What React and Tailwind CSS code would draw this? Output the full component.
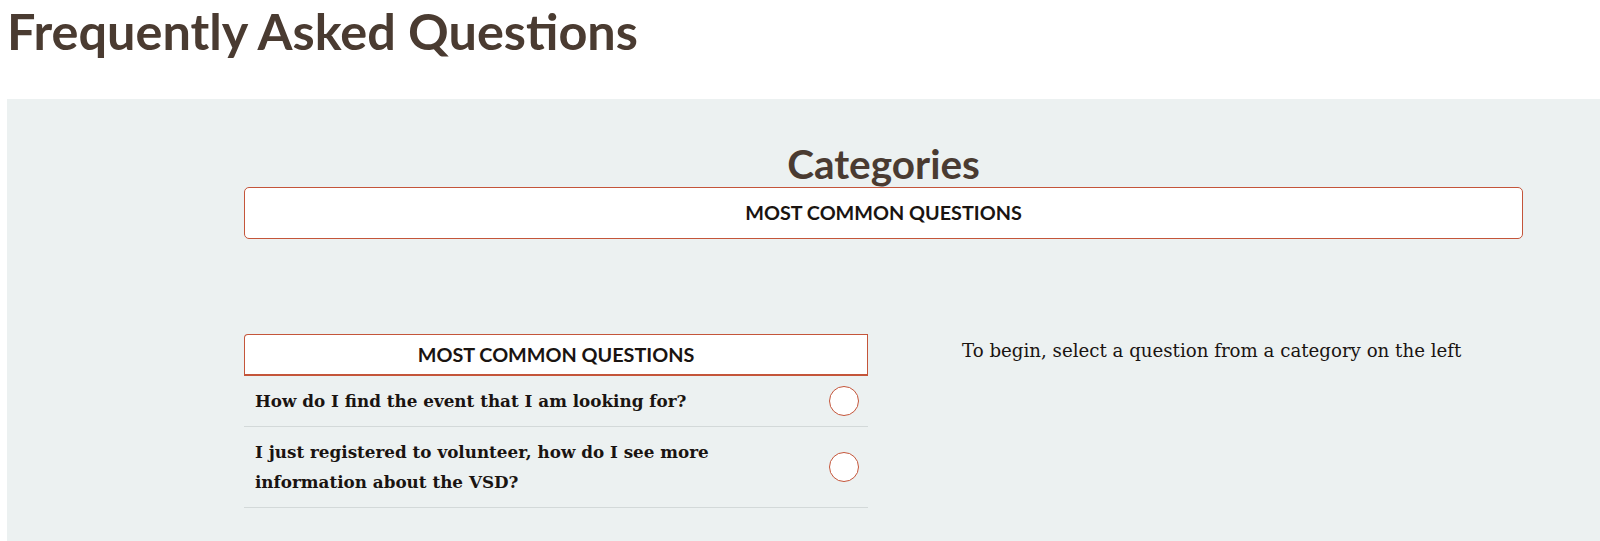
const QUESTIONS = [
  'How do I find the event that I am looking for?',
  'I just registered to volunteer, how do I see more information about the VSD?',
];

const lato = { fontFamily: 'Lato, "Liberation Sans", sans-serif' };
const serif = { fontFamily: '"DejaVu Serif", "Liberation Serif", serif' };

function Circle() {
  return <span className="block w-[30px] h-[30px] rounded-full border-[1.5px] border-[#c4553a] bg-white flex-shrink-0" />;
}

export default function App() {
  return (
    <div className="w-[1600px] h-[541px] overflow-hidden bg-white">
      <h1 className="text-[50.4px] leading-none font-bold text-[#4a3b31] pl-[7px] pt-[6px] h-[99px]" style={lato}>
        Frequently Asked Questions
      </h1>
      <div className="ml-[7px] bg-[#ecf1f1] h-[442px] pt-[42px]">
        <div className="ml-[237px] w-[1279px]">
          <h2 className="text-[40.5px] leading-[46px] font-bold text-[#4a3b31] text-center" style={lato}>Categories</h2>
          <button className="block w-full h-[52px] bg-white border border-[#c4553a] rounded-[5px] text-[19.8px] font-bold text-[#1a1411]" style={lato}>
            MOST COMMON QUESTIONS
          </button>
          <div className="flex mt-[95px]">
            <div className="w-[624px]">
              <div className="h-[42px] flex items-center justify-center bg-white border border-[#c4553a] border-b-2 rounded-tl-[4px] text-[19.8px] font-bold text-[#1a1411]" style={lato}>
                MOST COMMON QUESTIONS
              </div>
              {QUESTIONS.map((q, i) => (
                <div key={i} className="flex items-center justify-between gap-6 border-b border-[#d3d9d9] pl-[11px] pr-[9px] py-[10px] min-h-[50px]">
                  <span className="text-[16.8px] leading-[30px] font-bold text-[#1a1411] max-w-[480px]" style={serif}>{q}</span>
                  <Circle />
                </div>
              ))}
            </div>
            <p className="ml-[94px] mt-[2px] text-[18.2px] leading-[30px] text-[#1a1411]" style={serif}>
              To begin, select a question from a category on the left
            </p>
          </div>
        </div>
      </div>
    </div>
  );
}
